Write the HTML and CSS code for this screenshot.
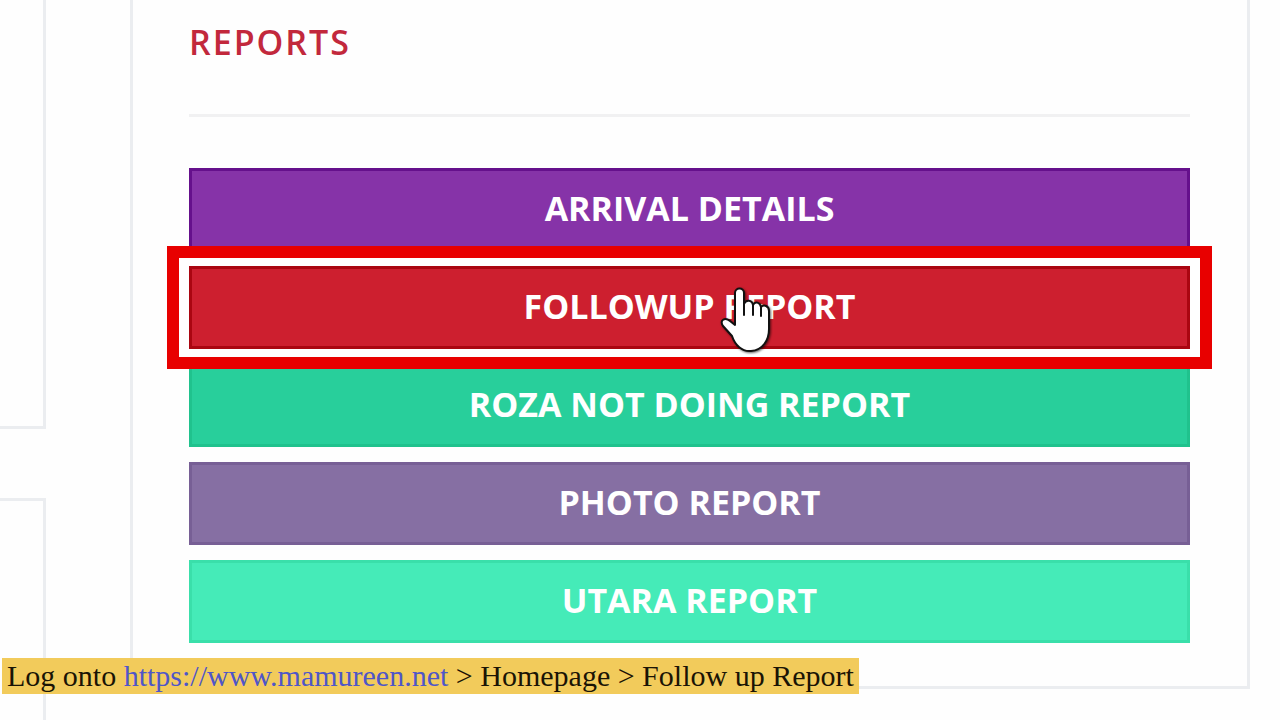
FILE: index.html
```html
<!DOCTYPE html>
<html lang="en">
<head>
<meta charset="UTF-8">
<meta name="viewport" content="width=device-width, initial-scale=1.0">
<title>Reports</title>
<link rel="stylesheet" href="styles.css">
</head>
<body>
<div class="page">
    <aside class="side">
        <div class="card card-top"></div>
        <div class="card card-bottom"></div>
    </aside>
    <main class="card reports">
        <h2>REPORTS</h2>
        <div class="buttons">
            <button type="button" class="btn arrival">ARRIVAL DETAILS</button>
            <div class="selected">
                <button type="button" class="btn followup">FOLLOWUP REPORT</button>
                <!-- Hand pointer -->
                <svg class="pointer" width="52" height="68" viewBox="0 0 52 68" aria-hidden="true">
                    <path d="M15 7C15 1 24 1 24 7V18C26 13 32 14 33 19C35 15 40 16 41 21C44 18 49 20 49 25V43C49 54 43 64 31 65C22 66 15 59 12 50L3 40C-1 34 5 31 10 35L15 39Z" fill="#fff" stroke="#111" stroke-width="2" stroke-linejoin="round"/>
                    <path d="M24 17V29M33 19V29M41 21V30" fill="none" stroke="#111" stroke-width="2" stroke-linecap="round"/>
                </svg>
            </div>
            <button type="button" class="btn roza">ROZA NOT DOING REPORT</button>
            <button type="button" class="btn photo">PHOTO REPORT</button>
            <button type="button" class="btn utara">UTARA REPORT</button>
        </div>
    </main>
</div>
<p class="caption">Log onto <a href="https://www.mamureen.net">https://www.mamureen.net</a> &gt; Homepage &gt; Follow up Report</p>
</body>
</html>
```
FILE: styles.css
```css
* {
    box-sizing: border-box;
}
body {
    margin: 0;
    background: #fefefe;
    font-family: "Open Sans", sans-serif;
    overflow: hidden;
}
.page {
    display: flex;
    align-items: flex-start;
    gap: 84px;
    min-height: 100vh;
    padding-right: 30px;
}
.card {
    border: 3px solid #ebedf0;
    background: #fefefe;
}

/* Neighbouring column, only its right edge is on screen */
.side {
    flex: 0 0 46px;
    display: flex;
    flex-direction: column;
    gap: 69px;
    height: 100vh;
}
.card-top {
    flex: 3;
    border-width: 0 3px 3px 0;
}
.card-bottom {
    flex: 0 0 222px;
    border-width: 3px 3px 0 0;
}

.reports {
    flex: 1;
    border-top: 0;
    padding: 20px 57px 43px 56px;
}
.reports h2 {
    margin: 0 0 51px;
    padding-bottom: 50px;
    border-bottom: 3px solid #f1f1f2;
    color: #c2283c;
    font-size: 34px;
    font-weight: 600;
    line-height: 44px;
    letter-spacing: 2px;
}
.buttons {
    display: flex;
    flex-direction: column;
    gap: 15px;
}
.btn {
    display: block;
    width: 100%;
    padding: 15px 12px 17px;
    border: 3px solid;
    color: #fff;
    font-family: inherit;
    font-size: 34px;
    font-weight: 700;
    line-height: 45px;
    cursor: pointer;
}
.arrival {
    background: #8633a8;
    border-color: #65108c;
}
.followup {
    position: relative;
    background: #cd1f2f;
    border-color: #aa0611;
}
.roza {
    background: #28cf9b;
    border-color: #20c28d;
}
.photo {
    background: #866fa3;
    border-color: #775f95;
}
.utara {
    background: #45ebb8;
    border-color: #3adfaa;
}

/* Red frame round the chosen report */
.selected {
    position: relative;
    z-index: 1;
}
.selected::before {
    content: "";
    position: absolute;
    inset: -20px -22px;
    border: 12px solid #e80000;
    background: #fff;
}
.pointer {
    position: absolute;
    top: 20px;
    left: calc(50% + 30px);
    filter: drop-shadow(1px 1px 1px rgba(0, 0, 0, 0.6));
}

.caption {
    position: fixed;
    left: 2px;
    bottom: 26px;
    z-index: 2;
    margin: 0;
    padding: 0 5px;
    background: #f2cb5b;
    color: #1a1405;
    font-family: "Liberation Serif", serif;
    font-size: 30px;
    line-height: 36px;
    white-space: nowrap;
}
.caption a {
    color: #4f56c8;
    text-decoration: none;
}
```
